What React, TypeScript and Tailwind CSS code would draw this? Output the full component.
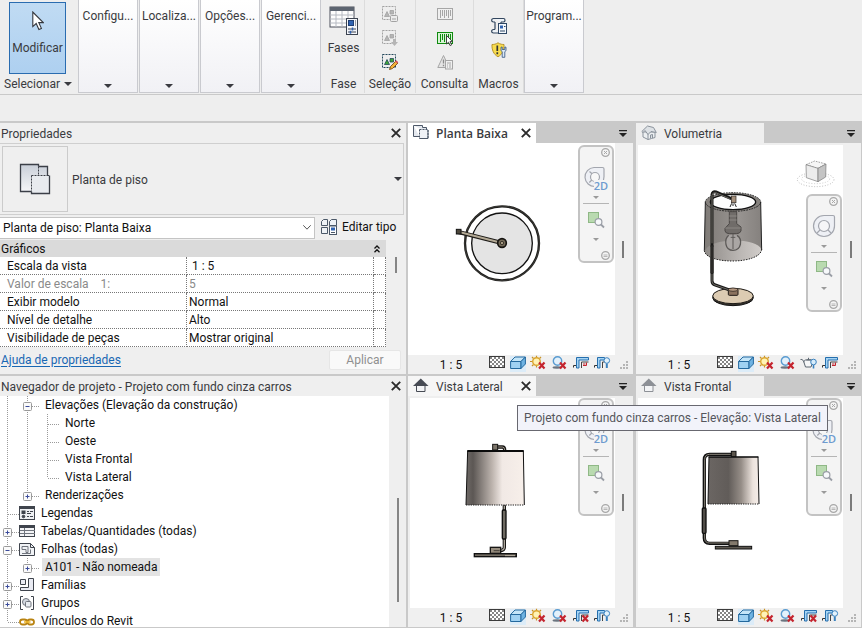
import type { ReactNode } from "react";

function Caret({ className = "" }: { className?: string }) {
  return (
    <svg viewBox="0 0 8 4" className={`w-2 h-1 shrink-0 ${className}`} fill="currentColor">
      <path d="M0 0h8L4 4z" />
    </svg>
  );
}

function CloseIcon() {
  return (
    <svg viewBox="0 0 10 10" className="w-2.5 h-2.5" stroke="#2b2b2b" strokeWidth="1.9">
      <path d="M.8.8l8.4 8.4M9.2.8L.8 9.2" />
    </svg>
  );
}

/* ---------- ribbon ---------- */

function CollapsedPanel({ label }: { label: string }) {
  return (
    <button className="w-[60px] h-[93px] flex flex-col items-center justify-between pt-2 pb-1 border border-t-0 border-[#c9cacf] bg-linear-to-b from-white to-[#f1f1f5]">
      <span className="leading-4 whitespace-nowrap">{label}</span>
      <Caret />
    </button>
  );
}

function RibbonPanel({ title, className, children }: { title: string; className: string; children: ReactNode }) {
  return (
    <section className={`h-[93px] flex flex-col items-center justify-between border-r border-[#dcdcdc] pb-px ${className}`}>
      <div className="flex flex-col items-center gap-2 pt-1.5">{children}</div>
      <h2 className="leading-4">{title}</h2>
    </section>
  );
}

function IconButton({ label, children, className = "" }: { label: string; children: ReactNode; className?: string }) {
  return (
    <button aria-label={label} className={`w-4 h-4 shrink-0 ${className}`}>
      <svg viewBox="0 0 16 16" className="w-4 h-4 overflow-visible" fill="none">
        {children}
      </svg>
    </button>
  );
}

function CursorIcon() {
  return (
    <svg viewBox="0 0 12 20" className="w-3 h-5" fill="#fff" stroke="#33363c" strokeWidth="1.1">
      <path d="M.8 1v14.6l3.4-3.1 2.7 6 2.5-1.1-2.6-5.8h4.5z" />
    </svg>
  );
}

function PhasesIcon() {
  return (
    <svg viewBox="0 0 30 30" className="w-[30px] h-[30px]" fill="none">
      <rect x="1" y="1" width="24" height="20" fill="#fdfdfd" stroke="#4a4f5a" />
      <rect x="1" y="1" width="24" height="4" fill="#5c6470" />
      <path d="M1 9h24M1 13h24M1 17h24M7 5v16M13 5v16M19 5v16" stroke="#b6bac2" />
      <rect x="17.5" y="12.5" width="11" height="16" fill="#f4f6fa" stroke="#3c4350" />
      <rect x="19.5" y="14.5" width="5" height="5" fill="#2f62b0" stroke="#1f3e73" />
      <path d="M26 15h1M26 17h1M26 19h1M19 23h8M19 26h8" stroke="#3c4350" />
      <path d="M23.5 21.5v3M21.5 24.7v3" stroke="#2f62b0" strokeWidth="1.5" />
    </svg>
  );
}

function SelectionShapes({ color, frame }: { color: string; frame: string }) {
  return (
    <>
      <rect x=".5" y=".5" width="13" height="13" stroke={frame} strokeDasharray="2 1" />
      <path d="M2.500 10.500L5 5.500l2.500 5zM8 4.500h3.500v3.500H8z" fill={color} stroke={frame} strokeWidth=".8" />
    </>
  );
}

function Barcode({ color, fill }: { color: string; fill: string }) {
  return (
    <>
      <rect x=".5" y="2.500" width="15" height="11" fill={fill} stroke={color} />
      <path d="M3.500 4v8M5.500 4v6M7.500 4v8M9.500 4v6M11.500 4v8M13.500 4v6" stroke={color} />
    </>
  );
}

function Ribbon() {
  return (
    <header className="flex border-b border-[#c9c9c9] h-[95px]">
      <div className="w-[77px] flex flex-col pt-0.5">
        <button className="ml-[9px] w-[57px] h-[72px] flex flex-col items-center gap-2 pt-2 border border-[#2a6cb0] bg-linear-to-b from-[#c0dbf3] to-[#aed0f0]">
          <CursorIcon />
          <span className="leading-4 mt-px">Modificar</span>
        </button>
        <button className="mt-0.5 ml-1 flex items-center gap-1 leading-4">
          Selecionar <Caret />
        </button>
      </div>
      <div className="flex gap-px ml-px">
        <CollapsedPanel label="Configu..." />
        <CollapsedPanel label="Localiza..." />
        <CollapsedPanel label="Opções..." />
        <CollapsedPanel label="Gerenci..." />
      </div>

      <RibbonPanel title="Fase" className="w-11 pl-0.5">
        <button className="flex flex-col items-center gap-1">
          <PhasesIcon />
          <span className="leading-4">Fases</span>
        </button>
      </RibbonPanel>
      <RibbonPanel title="Seleção" className="w-[51px]">
        <IconButton label="Salvar seleção">
          <SelectionShapes color="#b5b5b5" frame="#a2a2a2" />
          <rect x="8.500" y="9.500" width="7" height="6" rx="1" fill="#ececec" stroke="#a2a2a2" />
          <path d="M10 13h4" stroke="#a2a2a2" />
        </IconButton>
        <IconButton label="Carregar seleção">
          <SelectionShapes color="#b5b5b5" frame="#a2a2a2" />
          <path d="M11 9h3v3h2l-3.500 4L9 12h2z" fill="#b5b5b5" />
        </IconButton>
        <IconButton label="Editar seleção">
          <SelectionShapes color="#3da536" frame="#24485c" />
          <path d="M7.500 15.500l1-3 5.500-5.500 2 2-5.500 5.500z" fill="#f3b43a" stroke="#7a4a16" strokeWidth=".9" />
          <path d="M13 7.500l1.300-1.300 2 2L15 9.500z" fill="#d9545b" />
        </IconButton>
      </RibbonPanel>
      <RibbonPanel title="Consulta" className="w-[58px]">
        <IconButton label="IDs da seleção">
          <Barcode color="#a6a6a6" fill="#f0f0f0" />
        </IconButton>
        <IconButton label="Selecionar por ID">
          <Barcode color="#0f8a0f" fill="#d7f3d4" />
          <path d="M9.500 5.500v8.500l2-1.800 1.600 3.400 1.500-.7-1.600-3.300h2.500z" fill="#fff" stroke="#333" strokeWidth=".9" />
        </IconButton>
        <IconButton label="Avisos">
          <path d="M6.500 1.500L.8 13.500h11.400z" fill="#e4e4e4" stroke="#a6a6a6" />
          <path d="M6.500 5.500v4M6.500 10.800v1.400" stroke="#8c8c8c" strokeWidth="1.300" />
          <rect x="8.500" y="6.500" width="7" height="8.500" fill="#efefef" stroke="#a6a6a6" />
          <path d="M10 9h4M10 11h1M12 11h2M10 13h1M12 13h2" stroke="#a6a6a6" />
        </IconButton>
      </RibbonPanel>
      <RibbonPanel title="Macros" className="w-[50px]">
        <IconButton label="Gerenciador de macros" className="mt-3">
          <path d="M2.500.5h10c2 0 2 3.500 0 3.500H10M2.500.5C0 .5 0 4 2.500 4H4M4 4v7.500M10 4v2" fill="#eef3f8" stroke="#33475f" strokeWidth="1.200" />
          <path d="M4 11.500H2.500c-2.500 0-2.500 3.500 0 3.500H8" fill="#eef3f8" stroke="#33475f" strokeWidth="1.200" />
          <rect x="7.500" y="5.500" width="8" height="10" fill="#f4f8fc" stroke="#2d4664" />
          <rect x="9" y="7.500" width="3" height="3" fill="#2f62b0" />
          <path d="M13 8.500h1.500M9 13h5" stroke="#2d4664" />
        </IconButton>
        <IconButton label="Segurança de macro">
          <path d="M7 .8c2 1.500 4.500 1.700 6 1.700.3 5-1.500 10-6 12.200C2.500 12.500.7 7.500 1 2.500 2.500 2.500 5 2.300 7 .8z" fill="#f8dc4e" stroke="#b8942a" />
          <path d="M6.300 3.500v5.500M6.300 10.300v2" stroke="#333" strokeWidth="1.700" />
          <path d="M10 5.200v3c0 .8.8 1.300 1.200 1.500v5.600h2.600V9.700c.6-.3 1.200-.7 1.200-1.500v-3L13.800 5v2.500h-2.600V5z" fill="#dbe8f5" stroke="#30527e" strokeWidth=".8" />
        </IconButton>
      </RibbonPanel>
      <CollapsedPanel label="Program..." />
    </header>
  );
}

/* ---------- properties ---------- */

const properties = [
  { name: "Escala da vista", value: " 1 : 5" },
  { name: "Valor de escala    1:", value: "5", muted: true },
  { name: "Exibir modelo", value: "Normal" },
  { name: "Nível de detalhe", value: "Alto" },
  { name: "Visibilidade de peças", value: "Mostrar original" },
];

function PanelHeader({ title }: { title: string }) {
  return (
    <div className="h-5 flex items-center justify-between pl-px pr-[5px] shrink-0">
      <h2 className="leading-4 pt-0.5 whitespace-nowrap">{title}</h2>
      <button aria-label="Fechar">
        <CloseIcon />
      </button>
    </div>
  );
}

function PropertiesPanel() {
  return (
    <section className="bg-[#efefef] flex flex-col min-h-0 overflow-hidden">
      <PanelHeader title="Propriedades" />
      <div className="h-[72px] mr-0.5 border border-l-0 border-[#cfcfcf] flex items-center">
        <div className="ml-0.5 w-[66px] h-[66px] border border-[#cbcbcb] flex items-center justify-center">
          <svg viewBox="0 0 32 32" className="w-8 h-8" fill="none">
            <defs>
              <linearGradient id="sheet" x1="0" y1="0" x2="0" y2="1">
                <stop offset="0" stopColor="#c9cfd8" />
                <stop offset="1" stopColor="#f6f7f9" />
              </linearGradient>
            </defs>
            <path d="M1.500 1.500h18v2.500h9v9h-16v16h-11z" fill="url(#sheet)" />
            <path d="M19.500 3.500V1.500h-18v27h11M19.500 3.500h9v9" stroke="#3b3f47" strokeWidth="1.300" />
            <rect x="12.500" y="12.500" width="18" height="18" fill="#e8ebef" />
            <path d="M30.500 12.500v18h-18v-2" stroke="#3b3f47" strokeWidth="1.300" />
            <path d="M28 12.500h2.500M12.500 12.500H28M12.500 12.500v16M19.500 3.500v9" stroke="#3b3f47" strokeDasharray="2 1" />
          </svg>
        </div>
        <span className="ml-1 pt-0.5 flex-1">Planta de piso</span>
        <button aria-label="Alterar tipo" className="mr-px">
          <Caret />
        </button>
      </div>
      <div className="flex items-center h-[25px] text-[#111]">
        <label className="w-[315px] relative">
          <select aria-label="Filtro de propriedades" className="appearance-none block w-full h-[22px] bg-white border border-l-0 border-[#c4c4c4] pl-[3px] leading-4">
            <option>Planta de piso: Planta Baixa</option>
          </select>
          <svg viewBox="0 0 8 5" className="absolute right-1 top-2 w-2 h-[5px]" fill="none" stroke="#555">
            <path d="M.3.300L4 4.200 7.700.300" />
          </svg>
        </label>
        <button className="ml-1.5 pb-0.5 flex items-center gap-[5px] whitespace-nowrap">
          <svg viewBox="0 0 16 16" className="w-4 h-4" fill="#eef2f6" stroke="#4b5868">
            <path d="M2.500.5h4v6h-6v-4zM8.500 2.500l2-2h5v6h-7zM.5 8.500h6v6h-6z" />
            <rect x="8.500" y="7" width="7" height="8.500" fill="#fff" />
            <rect x="10" y="8.500" width="4" height="3" fill="#2f62b0" stroke="none" />
            <path d="M10 13.500h4" />
          </svg>
          Editar tipo
        </button>
      </div>
      <div className="flex h-[107px] shrink-0 text-[#111]">
        <div className="flex-1">
          <button className="w-full h-[17px] bg-[#dadada] flex items-center justify-between pl-px pr-1.5">
            Gráficos
            <svg viewBox="0 0 6 8" className="w-1.5 h-2" fill="none" stroke="#111" strokeWidth="1.300">
              <path d="M.5 3.500L3 1l2.500 2.500M.5 7.200L3 4.700l2.500 2.500" />
            </svg>
          </button>
          <table className="w-full table-fixed border-separate border-spacing-0 bg-white">
            <colgroup>
              <col className="w-[187px]" />
              <col />
              <col className="w-3" />
            </colgroup>
            <tbody>
              {properties.map((p) => (
                <tr key={p.name} className={p.muted ? "text-[#8a8a8a]" : ""}>
                  <th className="h-[18px] p-0 pl-[7px] text-left font-normal leading-4 whitespace-pre border-b border-r border-dotted border-[#777]">{p.name}</th>
                  <td className="p-0 pl-0.5 leading-4 whitespace-pre border-b border-r border-dotted border-[#777]">{p.value}</td>
                  <td className="p-0 border-b border-r border-dotted border-[#777]" />
                </tr>
              ))}
            </tbody>
          </table>
        </div>
        <div className="w-5 flex justify-center pt-[17px]">
          <div className="w-0.5 h-4 bg-[#858585]" />
        </div>
      </div>
      <div className="flex items-center justify-between flex-1 pl-px pr-[5px] pb-0.5">
        <a href="#" className="text-[#1967b3] underline underline-offset-2">Ajuda de propriedades</a>
        <button disabled className="w-[72px] h-5 bg-[#f9f9f9] border border-[#e6e6e6] rounded-xs text-[#8f8f8f] leading-4">Aplicar</button>
      </div>
    </section>
  );
}

/* ---------- project browser ---------- */

type Guide = "line" | "tee" | "end" | "plus" | "minus" | "plusTop";
type TreeNode = { label: string; guides: Guide[]; icon?: ReactNode; selected?: boolean };

function GuideCell({ kind }: { kind: Guide }) {
  const box = kind === "plus" || kind === "minus" || kind === "plusTop";
  const half = kind === "end" || kind === "plusTop";
  const art = (
    <svg viewBox="0 0 20 18" className="w-5 h-[18px]" fill="none" stroke="#9a9a9a">
      <path d={half ? "M7.500 0v10" : "M7.500 0v18"} strokeDasharray="1 1" />
      {kind !== "line" && <path d="M8 10.500h12" strokeDasharray="1 1" />}
      {box && (
        <>
          <rect x="3.500" y="6.500" width="8" height="8" rx="1" fill="#fafafa" />
          <path d={kind === "minus" ? "M5.500 10.500h4" : "M5.500 10.500h4M7.500 8.500v4"} stroke="#3a4a9a" />
        </>
      )}
    </svg>
  );
  return box ? (
    <button aria-label={kind === "minus" ? "Recolher" : "Expandir"} className="shrink-0">{art}</button>
  ) : (
    <span className="shrink-0">{art}</span>
  );
}

function TreeIcon({ children }: { children: ReactNode }) {
  return (
    <svg viewBox="0 0 16 16" className="w-4 h-4 shrink-0 -ml-px mr-1" fill="none" stroke="#3f444d">
      {children}
    </svg>
  );
}

const tree: TreeNode[] = [
  { label: "Elevações (Elevação da construção)", guides: ["line", "minus"] },
  { label: "Norte", guides: ["line", "line", "tee"] },
  { label: "Oeste", guides: ["line", "line", "tee"] },
  { label: "Vista Frontal", guides: ["line", "line", "tee"] },
  { label: "Vista Lateral", guides: ["line", "line", "end"] },
  { label: "Renderizações", guides: ["line", "plusTop"] },
  {
    label: "Legendas",
    guides: ["tee"],
    icon: (
      <TreeIcon>
        <rect x=".5" y="1.500" width="15" height="13" fill="#eef0f3" />
        <path d="M1 3h14" strokeWidth="2" />
        <rect x="3" y="6" width="3" height="2.500" fill="#3f444d" />
        <circle cx="4.500" cy="11.500" r="1.300" fill="#3f444d" />
        <path d="M8 6.500h2M11 6.500h3M8 8.500h4M8 11.500h2M11 11.500h3" />
      </TreeIcon>
    ),
  },
  {
    label: "Tabelas/Quantidades (todas)",
    guides: ["plus"],
    icon: (
      <TreeIcon>
        <rect x=".5" y="2.500" width="15" height="11" fill="#f3f4f6" />
        <path d="M1 4h14" strokeWidth="2" />
        <path d="M1 7.500h15M1 10.500h15M5.500 5v8" stroke="#70757e" />
      </TreeIcon>
    ),
  },
  {
    label: "Folhas (todas)",
    guides: ["minus"],
    icon: (
      <TreeIcon>
        <path d="M.5 2.500h11l4 4v8H.5z" fill="#f1f3f6" />
        <path d="M11.500 2.500v4h4" />
        <path d="M3 5.500h6v6H7v-3H3zM11.500 8.500v4H3" stroke="#70757e" />
      </TreeIcon>
    ),
  },
  { label: "A101 - Não nomeada", guides: ["line", "plusTop"], selected: true },
  {
    label: "Famílias",
    guides: ["plus"],
    icon: (
      <TreeIcon>
        <path d="M1.500 2.500h5v5h-5zM9.500 1.500h5v12h-13v-3h8z" fill="#e9ebf3" />
      </TreeIcon>
    ),
  },
  {
    label: "Grupos",
    guides: ["plus"],
    icon: (
      <TreeIcon>
        <path d="M4 1.500H1.500v13H4M12 1.500h2.500v13H12" />
        <circle cx="7" cy="7" r="3.500" fill="#d5dae2" stroke="#70757e" />
        <rect x="6.500" y="6.500" width="5.500" height="5.500" rx="1" fill="#e9edf2" stroke="#70757e" />
      </TreeIcon>
    ),
  },
  {
    label: "Vínculos do Revit",
    guides: ["end"],
    icon: (
      <TreeIcon>
        <rect x="1" y="6.500" width="7" height="5" rx="2.500" stroke="#b98311" strokeWidth="1.800" />
        <rect x="8.500" y="6.500" width="6.500" height="5" rx="2.500" stroke="#b98311" strokeWidth="1.800" />
        <path d="M5 9h6.500" stroke="#f0b92c" strokeWidth="1.600" />
      </TreeIcon>
    ),
  },
];

function ProjectBrowser() {
  return (
    <section className="bg-[#efefef] flex flex-col min-h-0 overflow-hidden">
      <PanelHeader title="Navegador de projeto - Projeto com fundo cinza carros" />
      <div className="flex flex-1 min-h-0">
        <ul className="flex-1 bg-white text-[#111]">
          {tree.map((node) => (
            <li key={node.label} className="h-[18px] flex items-center">
              {node.guides.map((g, i) => (
                <GuideCell key={i} kind={g} />
              ))}
              {node.icon}
              <span className={`whitespace-nowrap ml-0.5 pr-[3px] ${node.icon ? "" : "pl-[3px]"} ${node.selected ? "bg-[#e3e3e3] leading-[18px]" : "leading-3"}`}>{node.label}</span>
            </li>
          ))}
        </ul>
        <div className="w-[17px] flex flex-col items-center">
          <div className="mt-[102px] w-0.5 h-[104px] bg-[#858585]" />
        </div>
      </div>
    </section>
  );
}

/* ---------- views ---------- */

function NavigationBar({ flat, className }: { flat?: boolean; className: string }) {
  return (
    <div className={`absolute right-px w-9 h-[118px] rounded-md border-2 border-[#c3c3c3] bg-[#f4f4f4] text-[#9a9a9a] flex flex-col items-center ${className}`}>
      <button aria-label="Fechar barra" className="self-end mr-0.5 mt-px">
        <svg viewBox="0 0 9 9" className="w-[9px] h-[9px]" fill="none" stroke="#a8a8a8">
          <circle cx="4.500" cy="4.500" r="3.800" strokeWidth="1.300" />
          <path d="M3 3l3 3M6 3L3 6" />
        </svg>
      </button>
      <button aria-label="Roda de navegação" className="relative mt-1.5 h-7">
        {flat ? (
          <>
            <svg viewBox="0 0 24 24" className="w-6 h-6" fill="#eef0f5" stroke="#a3a6ae" strokeWidth="1.200">
              <path d="M10 2.500h8.500c1.200 0 1.500.5 1.500 1.500v7.500a9.500 9.500 0 1 1-10-9z" />
              <circle cx="11" cy="12" r="4.500" fill="#f8f8f8" />
              <path d="M7.800 15l-2.500 2.500M14.200 15l2 2M8 8.800L5.500 6.500" />
            </svg>
            <span className="absolute right-0 -bottom-px text-[11px] leading-3 font-semibold text-[#6e9bcf] bg-[#f4f4f4] font-['Open_Sans',sans-serif]">2D</span>
          </>
        ) : (
          <svg viewBox="0 0 24 24" className="w-6 h-6" fill="#eef0f5" stroke="#a3a6ae" strokeWidth="1.200">
            <path d="M12 1.500h9c1 0 1.500.5 1.500 1.500v9A10.500 10.500 0 1 1 12 1.500z" />
            <circle cx="12" cy="12" r="5.500" fill="#f6f6f8" />
            <path d="M8 16l-3 3M16 16l3 3" />
          </svg>
        )}
      </button>
      <Caret className="mt-[5px] h-[3px]! w-1.5!" />
      <div className="w-[26px] h-px bg-[#b5b5b5] mt-1 shrink-0" />
      <button aria-label="Zoom na região" className="mt-[7px]">
        <svg viewBox="0 0 18 18" className="w-[18px] h-[18px]" fill="none">
          <rect x="1.500" y="1.500" width="10" height="10" fill="#b9dab0" stroke="#8fb886" />
          <circle cx="11.500" cy="11" r="3.400" fill="#f7f9fb" stroke="#9a9ea6" strokeWidth="1.200" />
          <path d="M14 13.500l3 3" stroke="#9a9ea6" strokeWidth="1.800" />
        </svg>
      </button>
      <Caret className="mt-[9px] h-[3px]! w-1.5!" />
      <button aria-label="Opções da barra" className="self-end mr-0.5 mt-auto mb-px">
        <svg viewBox="0 0 9 9" className="w-[9px] h-[9px]" fill="none" stroke="#a8a8a8">
          <circle cx="4.500" cy="4.500" r="3.800" strokeWidth="1.300" />
          <path d="M2.500 4h4M2.500 5.500h4" strokeWidth=".8" />
        </svg>
      </button>
    </div>
  );
}

function RedX() {
  return <path d="M8 6.500l5.500 6M13.500 6.500l-5.500 6" stroke="#c4242e" strokeWidth="2.200" />;
}

function CropFrame({ to, inner }: { to: number; inner: string }) {
  return (
    <>
      <path d={`M3.500 12V1.500H${to}V4H6V12z`} fill="#a6d4f4" stroke="#256fae" />
      <path d={`M8.500 12V6H${to}`} stroke={inner} />
      <path d="M.5 11.500V9.500H3" stroke="#333" />
    </>
  );
}

const controls = {
  detail: (
    <IconButton key="detail" label="Nível de detalhe">
      <rect x=".5" y=".5" width="15" height="11" fill="#fff" stroke="#3c3c3c" />
      <path d="M1 2h14M1 6h14M1 10h14" stroke="#858585" strokeWidth="2" strokeDasharray="2 2" />
      <path d="M3 4h12M3 8h12" stroke="#858585" strokeWidth="2" strokeDasharray="2 2" />
    </IconButton>
  ),
  style: (
    <IconButton key="style" label="Estilo visual" className="bg-[#dcecf8]">
      <g stroke="#24699e" strokeLinejoin="round">
        <path d="M.6 5.500L5 1h10.400L11 5.500z" fill="#c4e5f8" />
        <path d="M.6 5.500H11v7H.6z" fill="#9fd1f2" />
        <path d="M11 5.500L15.400 1v7L11 12.500z" fill="#6fb3e2" />
      </g>
    </IconButton>
  ),
  sun: (
    <IconButton key="sun" label="Caminho do sol">
      <path d="M5.500-.3v2M1 1l1.500 1.500M-1 5.500h2M10 1L8.500 2.500M1 10l1.500-1.500M5.500 9.500v2" stroke="#c99327" strokeWidth="1.200" />
      <circle cx="5.500" cy="5.500" r="3.800" fill="#fff3b5" stroke="#dba52f" strokeWidth="1.400" />
      <RedX />
    </IconButton>
  ),
  shadow: (
    <IconButton key="shadow" label="Sombras">
      <ellipse cx="5" cy="11.500" rx="4.500" ry="1.200" fill="#6b7580" />
      <circle cx="5.500" cy="5" r="4.200" fill="#e3f1fb" stroke="#5a9bd0" strokeWidth="1.400" />
      <RedX />
    </IconButton>
  ),
  render: (
    <IconButton key="render" label="Renderização">
      <path d="M-.5 3.500c2.500-.5 2.500 1 3.500 3l1.500 4.500h5.500l1-3V4H4.500c-1 0-1.500 1-1.500 2.500M5.500 3.800h4.500M7.500 1.800v2" fill="#f6f7f8" stroke="#5c6670" />
      <circle cx="12.500" cy="6" r="2.800" fill="#d6ecfb" stroke="#3b82bf" />
      <path d="M12.500 9v3.500" stroke="#3b82bf" strokeWidth="1.600" />
    </IconButton>
  ),
  crop: (
    <IconButton key="crop" label="Recortar vista">
      <CropFrame to={15.500} inner="#444" />
      <path d="M10 9.500h3.500V6.500M10 8h2.500" stroke="#c4242e" />
    </IconButton>
  ),
  cropOff: (
    <IconButton key="cropOff" label="Não recortar vista">
      <CropFrame to={15.500} inner="#444" />
      <g transform="translate(1.5)">
        <RedX />
      </g>
    </IconButton>
  ),
  region: (
    <IconButton key="region" label="Mostrar região de recorte">
      <CropFrame to={10.500} inner="#444" />
      <circle cx="12.800" cy="4.500" r="2.800" fill="#e3f2fc" stroke="#3b82bf" />
      <path d="M12.800 7.500v4.500" stroke="#3b82bf" strokeWidth="2" />
    </IconButton>
  ),
};

type ViewProps = {
  title: string;
  icon: ReactNode;
  drawing: ReactNode;
  viewBox: string;
  tools: (keyof typeof controls)[];
  tab?: string;
  closable?: boolean;
  flat?: boolean;
  framed?: boolean;
  navClass?: string;
  tooltip?: string;
};

function ViewWindow({ title, icon, drawing, viewBox, tools, tab = "bg-[#efefef]", closable, flat, framed = true, navClass = "top-0.5", tooltip }: ViewProps) {
  return (
    <section className="relative flex flex-col min-w-0 min-h-0 pr-px">
      <div className="h-5 flex items-center justify-between shrink-0 pr-1.5">
        <div className={`w-32 h-5 flex items-center px-[5px] ${tab}`}>
          <svg viewBox="0 0 16 16" className="w-4 h-4 mr-[7px]" fill="none">
            {icon}
          </svg>
          <a href="#" className="flex-1 leading-4 pt-0.5 whitespace-nowrap">{title}</a>
          {closable && (
            <button aria-label="Fechar vista">
              <CloseIcon />
            </button>
          )}
        </div>
        <button aria-label="Lista de vistas">
          <svg viewBox="0 0 8 7" className="w-2 h-[7px]" fill="#222">
            <path d="M0 0h8v1.300H0zM0 3h8L4 7z" />
          </svg>
        </button>
      </div>
      <div className="flex flex-1 min-h-0 bg-[#f0f0f0]">
        <div className={`relative flex-1 bg-white ${framed ? "shadow-[inset_2px_2px_0_#efefef]" : ""}`}>
          <svg viewBox={viewBox} className="absolute inset-0 w-full h-full" fill="none">
            {drawing}
          </svg>
          <NavigationBar flat={flat} className={navClass} />
        </div>
        <div className="w-[18px] flex justify-center items-center pr-0.5">
          <div className="w-0.5 h-[17px] bg-[#7b7b7b]" />
        </div>
      </div>
      <div className="h-[19px] flex items-center gap-[5px] bg-[#f0f0f0] pr-1 shrink-0">
        <button className="w-[76px] pl-2.5 text-center whitespace-pre leading-4 text-[#111]">1 : 5</button>
        <div className="flex gap-[5px] self-start pt-px">{tools.map((t) => controls[t])}</div>
        <svg viewBox="0 0 9 9" className="w-[9px] h-[9px] ml-auto self-end mb-1 shrink-0" fill="#b5b5b5">
          <path d="M6 0h2v2H6zM3 3h2v2H3zM6 3h2v2H6zM0 6h2v2H0zM3 6h2v2H3zM6 6h2v2H6z" />
        </svg>
      </div>
      {tooltip && (
        <div role="tooltip" className="absolute left-[109px] top-[29px] z-10 h-[26px] px-1.5 flex items-center whitespace-nowrap border border-[#686870] bg-[#f2f3fa] text-[#55565c]">{tooltip}</div>
      )}
    </section>
  );
}

const planIcon = (
  <>
    <path d="M.5.500h9v2h4v4M.5.500v11h6" fill="#e4e8ee" stroke="#4d5868" />
    <path d="M6.500 4.500h8.500v9h-8.500z" fill="#f0f2f6" stroke="#4d5868" strokeDasharray="2 1" />
    <path d="M15 5v8.500H6.500" stroke="#4d5868" />
  </>
);

const houseIcon3d = (
  <g stroke="#8b939c" strokeLinejoin="round" fill="#dde1e5">
    <path d="M2 7v5l5 2.500 7-2V7z" fill="#eceff1" />
    <path d="M7 14.500V8M9.500 13.500v-3.500l2-.5v3.500" />
    <path d="M.8 6.500L6.500 1l6 1.500L15.300 7.500 10 6.500 7 9.500 4 5.500 2 7.500z" />
  </g>
);

const elevationIcon = (fill: string, body: string) => (
  <>
    <path d="M3.500 7.500h8.500v6H3.500z" fill={body} stroke={fill} />
    <path d="M7.800.500l7.700 7.500H0z" fill={fill} />
    <path d="M6 8h4v5H6z" fill={body} />
  </>
);

const planDrawing = (
  <>
    <circle cx="291" cy="370" r="111" fill="#fff" stroke="#1d1d1b" strokeWidth="7" />
    <circle cx="291" cy="370" r="112" stroke="#77746c" strokeWidth="1" />
    <circle cx="291" cy="370" r="91" fill="#e4e4e4" stroke="#111" strokeWidth="4" />
    <path d="M160 336l131 33" stroke="#1c1a17" strokeWidth="13" />
    <path d="M166 337l122 31" stroke="#b3a995" strokeWidth="6" />
    <rect x="154" y="328" width="14" height="14" fill="#4d473c" stroke="#111" strokeWidth="3" />
    <circle cx="291" cy="369" r="13" fill="#746a58" stroke="#15130f" strokeWidth="5" />
    <circle cx="291" cy="369" r="5" fill="#a89b82" stroke="#15130f" strokeWidth="2" />
  </>
);

const volumeDrawing = (
  <>
    <defs>
      <linearGradient id="glass" x1="0" x2="1">
        <stop offset="0" stopColor="#7f7b77" />
        <stop offset=".6" stopColor="#989491" />
        <stop offset="1" stopColor="#85817e" />
      </linearGradient>
      <linearGradient id="floor" x1="0" x2="1">
        <stop offset="0" stopColor="#918d8a" />
        <stop offset="1" stopColor="#dedad7" />
      </linearGradient>
    </defs>
    <ellipse cx="303" cy="533" rx="61" ry="24" fill="#33302b" stroke="#111" strokeWidth="3" />
    <ellipse cx="303" cy="528" rx="61" ry="23" fill="#dccbb2" stroke="#1b1814" strokeWidth="3" />
    <path d="M240 400v82q0 10 10 13l48 17" stroke="#1a1a19" strokeWidth="9" strokeLinejoin="round" />
    <path d="M240 462v22q0 8 9 11l46 16" stroke="#6d6a64" strokeWidth="3" />
    <path d="M220 246L217 392C222 434 385 434 389 388L386 246z" fill="url(#glass)" />
    <path d="M218 394C232 352 375 352 388 388C384 434 222 434 218 394z" fill="url(#floor)" opacity=".85" />
    <ellipse cx="303" cy="246" rx="83" ry="28" fill="#85817d" stroke="#222" strokeWidth="3" strokeDasharray="5 3" />
    <ellipse cx="303" cy="246" rx="68" ry="23" fill="#fdfdfd" stroke="#111" strokeWidth="4" />
    <path d="M220 246L217 392M386 246L389 390" stroke="#222" strokeWidth="3" />
    <path d="M217 392C222 434 385 434 389 388" stroke="#222" strokeWidth="3" strokeDasharray="4 4" />
    <path d="M240 380V224q1-11 12-8l46 20" stroke="#1a1a19" strokeWidth="9" />
    <path d="M240 370V226q1-9 11-8l42 18" stroke="#6d6a64" strokeWidth="3" />
    <path d="M240 376v84" stroke="#2a2927" strokeWidth="10" />
    <rect x="298" y="228" width="14" height="20" fill="#a5907c" stroke="#2c251f" strokeWidth="2" />
    <path d="M299 250l-5 11M308 250l5 11M303 250v8" stroke="#222" strokeWidth="3" />
    <path d="M292 275h22v36l13 10v12q-3 8-14 8h-20q-12 0-14-8v-8l13-14z" fill="#706c69" stroke="#4c4947" strokeWidth="3" />
    <path d="M292 288h22M292 300h22M280 324h46" stroke="#8c8885" strokeWidth="3" />
    <path d="M290 346c-14 12-12 45 13 45s30-33 12-45" fill="#aaa6a4" stroke="#5c5957" strokeWidth="4" />
    <path d="M303 342v45M296 352h14" stroke="#5c5957" strokeWidth="3" />
    <rect x="289" y="507" width="29" height="19" rx="3" fill="#8b725e" stroke="#211b16" strokeWidth="3" />
    <ellipse cx="303" cy="509" rx="14" ry="5" fill="#b39780" stroke="#211b16" strokeWidth="2" />
    {/* view cube */}
    <ellipse cx="551" cy="179" rx="55" ry="21" stroke="#9d9d9d" strokeWidth="2" strokeDasharray="3 5" />
    <ellipse cx="551" cy="177" rx="42" ry="14" stroke="#b5b5b5" strokeWidth="2" strokeDasharray="3 5" />
    <g stroke="#777" strokeWidth="2">
      <path d="M522 134l26-11 34 9-24 13z" fill="#f6f6f6" strokeDasharray="5 3" />
      <path d="M522 134l36 11v40l-35-12z" fill="#ececec" />
      <path d="M558 145l24-13-1 39-23 14z" fill="#c4c4c4" />
    </g>
  </>
);

const sideDrawing = (
  <>
    <defs>
      <linearGradient id="sideShade" x1="0" x2="1">
        <stop offset="0" stopColor="#6f6a67" />
        <stop offset=".12" stopColor="#5c5754" />
        <stop offset=".45" stopColor="#bdb4ae" />
        <stop offset=".62" stopColor="#f1e9e5" />
        <stop offset="1" stopColor="#f7efea" />
      </linearGradient>
    </defs>
    <path d="M272 219h20q7 0 7 9" stroke="#181715" strokeWidth="10" />
    <path d="M278 219h14q7 0 7 9" stroke="#9a9388" strokeWidth="3" />
    <rect x="263" y="211" width="15" height="17" fill="#7d766b" stroke="#181715" strokeWidth="3" />
    <path d="M188 230h167l3 163H183z" fill="url(#sideShade)" />
    <path d="M188 230L183 393M355 230l3 163" stroke="#111" strokeWidth="3" />
    <path d="M187 231h169" stroke="#0b0b0b" strokeWidth="6" />
    <path d="M183 393h175" stroke="#222" strokeWidth="3" strokeDasharray="4 3" />
    <path d="M298 394v126q0 10-14 10" stroke="#181715" strokeWidth="10" />
    <path d="M298 396v124q0 9-12 9" stroke="#aaa49a" strokeWidth="4" />
    <rect x="292" y="408" width="11" height="87" rx="3" fill="#6e6a62" stroke="#111" strokeWidth="4" />
    <rect x="256" y="520" width="31" height="18" fill="#968c7d" stroke="#181715" strokeWidth="4" />
    <path d="M266 530h18" stroke="#181715" strokeWidth="2" />
    <rect x="208" y="539" width="126" height="9" fill="#716b61" stroke="#111" strokeWidth="4" />
    <path d="M300 545h30" stroke="#b9b1a3" strokeWidth="3" />
  </>
);

const frontDrawing = (
  <>
    <defs>
      <linearGradient id="frontShade" x1="0" x2="1">
        <stop offset="0" stopColor="#6b6663" />
        <stop offset=".4" stopColor="#615c59" />
        <stop offset=".65" stopColor="#958d87" />
        <stop offset=".88" stopColor="#ece3dd" />
        <stop offset="1" stopColor="#f5ede8" />
      </linearGradient>
    </defs>
    <path d="M300 241h-67q-16 0-16 16v235q0 16 16 16h62" stroke="#111" strokeWidth="10" />
    <path d="M296 241h-63q-15 0-15 16v235q0 15 15 15h62" stroke="#8a857b" strokeWidth="3" />
    <rect x="211" y="402" width="11" height="76" rx="3" fill="#504d48" stroke="#111" strokeWidth="4" />
    <rect x="298" y="232" width="14" height="16" fill="#5b554c" stroke="#111" strokeWidth="3" />
    <path d="M231 248h147l3 142H228z" fill="url(#frontShade)" />
    <path d="M231 248l-3 142M378 248l3 142" stroke="#111" strokeWidth="3" />
    <path d="M230 249h149" stroke="#0b0b0b" strokeWidth="5" />
    <path d="M228 390h153" stroke="#222" strokeWidth="3" strokeDasharray="4 3" />
    <rect x="291" y="500" width="27" height="15" fill="#837a6d" stroke="#181715" strokeWidth="3" />
    <rect x="250" y="517" width="109" height="8" fill="#5d5850" stroke="#111" strokeWidth="3" />
  </>
);

export default function App() {
  return (
    <div className="min-h-screen flex flex-col bg-[#eeeeee] text-[#3a3b40] text-xs font-[Roboto,'Open_Sans',sans-serif]">
      <Ribbon />
      <div className="h-[26px]" />
      <main className="flex-1 min-h-0 grid grid-cols-[minmax(0,406fr)_minmax(0,226fr)_minmax(0,226fr)] auto-rows-[251px] gap-0.5 bg-[#c9c9c9] pt-0.5 pb-px">
        <PropertiesPanel />
        <ViewWindow
          title="Planta Baixa"
          icon={planIcon}
          drawing={planDrawing}
          viewBox="9 69 621 636"
          tools={["detail", "style", "sun", "shadow", "crop", "region"]}
          tab="bg-white font-semibold font-['Open_Sans',sans-serif]"
          closable
          flat
          framed={false}
        />
        <ViewWindow
          title="Volumetria"
          icon={houseIcon3d}
          drawing={volumeDrawing}
          viewBox="12 69 621 636"
          tools={["detail", "style", "sun", "shadow", "render", "crop"]}
          navClass="top-[51px]"
        />
        <ProjectBrowser />
        <ViewWindow
          title="Vista Lateral"
          icon={elevationIcon("#474b54", "#f3f4f6")}
          drawing={sideDrawing}
          viewBox="9 66 621 636"
          tools={["detail", "style", "sun", "shadow", "cropOff", "region"]}
          tab="bg-[#f6f6f6]"
          closable
          flat
          tooltip="Projeto com fundo cinza carros - Elevação: Vista Lateral"
        />
        <ViewWindow
          title="Vista Frontal"
          icon={elevationIcon("#8d9096", "#f3f4f6")}
          drawing={frontDrawing}
          viewBox="12 66 621 636"
          tools={["detail", "style", "sun", "shadow", "cropOff", "region"]}
          flat
        />
      </main>
    </div>
  );
}
